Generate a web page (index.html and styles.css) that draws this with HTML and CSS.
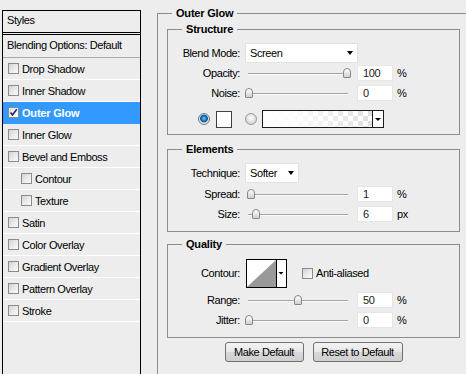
FILE: index.html
```html
<!DOCTYPE html>
<html>
<head>
<meta charset="utf-8">
<link rel="stylesheet" href="styles.css">
</head>
<body>
<div class="dialog">
  <div class="styles">
    <div class="styles-head">Styles</div>
    <div class="blend-opts">Blending Options: Default</div>
    <div class="item"><span class="cb"></span>Drop Shadow</div>
    <div class="item"><span class="cb"></span>Inner Shadow</div>
    <div class="item active"><span class="cb"><svg width="9" height="9" viewBox="0 0 9 9"><path d="M1.5 4.5 L3.5 7 L7.8 1.2" fill="none" stroke="#24236a" stroke-width="1.6"/></svg></span>Outer Glow</div>
    <div class="item"><span class="cb"></span>Inner Glow</div>
    <div class="item"><span class="cb"></span>Bevel and Emboss</div>
    <div class="item sub"><span class="cb"></span>Contour</div>
    <div class="item sub"><span class="cb"></span>Texture</div>
    <div class="item"><span class="cb"></span>Satin</div>
    <div class="item"><span class="cb"></span>Color Overlay</div>
    <div class="item"><span class="cb"></span>Gradient Overlay</div>
    <div class="item"><span class="cb"></span>Pattern Overlay</div>
    <div class="item"><span class="cb"></span>Stroke</div>
  </div>

  <fieldset class="outer">
    <legend class="outer-legend">Outer Glow</legend>

    <fieldset class="group structure">
      <legend>Structure</legend>
      <div class="row">
        <span class="lbl">Blend Mode:</span>
        <div class="select blend">Screen<span class="caret"></span></div>
      </div>
      <div class="row">
        <span class="lbl">Opacity:</span>
        <div class="slider"><span class="thumb" style="left:98px"></span></div>
        <span class="num">100</span><span class="unit">%</span>
      </div>
      <div class="row">
        <span class="lbl">Noise:</span>
        <div class="slider"><span class="thumb" style="left:0px"></span></div>
        <span class="num">0</span><span class="unit">%</span>
      </div>
      <div class="color-row">
        <span class="radio on"></span>
        <span class="swatch"></span>
        <span class="radio"></span>
        <div class="gradbox"><span class="grad"></span><span class="grad-arrow"><span class="caret"></span></span></div>
      </div>
    </fieldset>

    <fieldset class="group elements">
      <legend>Elements</legend>
      <div class="row tall">
        <span class="lbl">Technique:</span>
        <div class="select tech">Softer<span class="caret"></span></div>
      </div>
      <div class="row">
        <span class="lbl">Spread:</span>
        <div class="slider"><span class="thumb" style="left:2px"></span></div>
        <span class="num">1</span><span class="unit">%</span>
      </div>
      <div class="row">
        <span class="lbl">Size:</span>
        <div class="slider"><span class="thumb" style="left:7px"></span></div>
        <span class="num">6</span><span class="unit">px</span>
      </div>
    </fieldset>

    <fieldset class="group quality">
      <legend>Quality</legend>
      <div class="row contour-row">
        <span class="lbl">Contour:</span>
        <svg class="contour" width="41" height="29" viewBox="0 0 41 29">
          <rect x="0.5" y="0.5" width="40" height="28" fill="#fff" stroke="#000"/>
          <polygon points="1,28 30,1 30,28" fill="#999"/>
          <line x1="30.5" y1="0.5" x2="30.5" y2="28.5" stroke="#000"/>
          <polygon points="32.5,13 37.5,13 35,15.5" fill="#000"/>
        </svg>
        <span class="cb aa"></span><span class="aa-text">Anti-aliased</span>
      </div>
      <div class="row range-row">
        <span class="lbl">Range:</span>
        <div class="slider"><span class="thumb" style="left:49px"></span></div>
        <span class="num">50</span><span class="unit">%</span>
      </div>
      <div class="row">
        <span class="lbl">Jitter:</span>
        <div class="slider"><span class="thumb" style="left:0px"></span></div>
        <span class="num">0</span><span class="unit">%</span>
      </div>
    </fieldset>

    <div class="buttons">
      <button class="btn make">Make Default</button>
      <button class="btn reset">Reset to Default</button>
    </div>
  </fieldset>
</div>
</body>
</html>
```

FILE: styles.css
```css
html, body {
  margin: 0;
  padding: 0;
}
body {
  width: 466px;
  height: 374px;
  overflow: hidden;
  background: #ededed;
  font: 11px "Liberation Sans", Arial, sans-serif;
  letter-spacing: -0.4px;
  color: #000;
}
.dialog {
  display: flex;
  align-items: flex-start;
}

/* left styles list */
.styles {
  flex: none;
  width: 137px;
  height: 380px;
  margin: 10px 0 0 2px;
  border: 1px solid #000;
  border-bottom: 0;
  background: #ededed;
}
.styles-head {
  height: 21px;
  line-height: 19px;
  padding-left: 4px;
  border-bottom: 3px double #000;
}
.blend-opts {
  height: 22px;
  line-height: 21px;
  padding-left: 4px;
  border-bottom: 1px solid #a9a9a9;
}
.item {
  display: flex;
  align-items: center;
  gap: 3px;
  height: 21px;
  padding-left: 5px;
  border-bottom: 1px solid #fff;
}
.item.sub {
  padding-left: 18px;
}
.item.active {
  background: #3399ff;
  color: #fff;
  font-weight: bold;
  letter-spacing: -0.2px;
  border-bottom-color: #3399ff;
}
.cb {
  flex: none;
  box-sizing: border-box;
  width: 11px;
  height: 11px;
  border: 1px solid #8b8b8b;
  background: linear-gradient(135deg, #d2d2d2 0%, #e9e9e9 50%, #fbfbfb 100%);
  display: flex;
  align-items: center;
  justify-content: center;
}
.item.active .cb {
  background: linear-gradient(135deg, #dcdcdc 0%, #f3f3f3 60%, #fff 100%);
}
.cb svg {
  display: block;
}

/* right side */
.outer {
  flex: 1;
  min-width: 0;
  box-sizing: border-box;
  min-height: 380px;
  margin: 6px 0 0 16px;
  padding: 2px 6px 0 9px;
  border: 1px solid #8c8c8c;
  border-right: 0;
  border-bottom: 0;
}
legend {
  font-weight: bold;
  line-height: 14px;
  letter-spacing: -0.2px;
  padding: 0 4px;
}
.outer-legend {
  margin-left: 5px;
}
.group {
  margin: 0;
  padding: 0;
  border: 1px solid #8c8c8c;
  min-width: 0;
}
.group legend {
  margin-left: 14px;
}
.structure {
  padding: 7px 0 4px;
}
.elements {
  margin-top: 7px;
  padding: 6px 0 7px;
}
.quality {
  margin-top: 5px;
  padding: 7px 0 7px;
}

.row {
  display: flex;
  align-items: center;
  height: 20px;
}
.row.tall {
  height: 22px;
}
.lbl {
  flex: none;
  width: 72px;
  margin-right: 5px;
  text-align: right;
}
.select {
  flex: none;
  box-sizing: border-box;
  display: flex;
  align-items: center;
  height: 20px;
  padding-left: 4px;
  background: #fff;
  border: 1px solid #e2e2e2;
}
.select.blend {
  width: 113px;
}
.select.tech {
  width: 54px;
}
.caret {
  width: 0;
  height: 0;
  margin-left: auto;
  margin-right: 4px;
  border-left: 3.5px solid transparent;
  border-right: 3.5px solid transparent;
  border-top: 4px solid #000;
}

.slider {
  flex: none;
  position: relative;
  width: 106px;
  height: 20px;
  margin-right: 6px;
}
.slider::before {
  content: "";
  position: absolute;
  left: 3px;
  right: 3px;
  top: 10px;
  border-top: 1px solid #a3a3a3;
  border-bottom: 1px solid #fbfbfb;
}
.thumb {
  position: absolute;
  top: 5px;
  box-sizing: border-box;
  width: 8px;
  height: 10px;
  border: 1px solid #878787;
  border-radius: 4px 4px 1px 1px;
  background: linear-gradient(#ffffff, #d0d0d0);
}
.num {
  flex: none;
  box-sizing: border-box;
  width: 36px;
  height: 16px;
  line-height: 15px;
  padding-left: 5px;
  margin-right: 4px;
  background: #fff;
  border: 1px solid #e6e6e6;
  color: #1a1a1a;
}

.color-row {
  display: flex;
  align-items: center;
  height: 22px;
  margin-top: 5px;
  padding-left: 30px;
}
.radio {
  flex: none;
  box-sizing: border-box;
  width: 12px;
  height: 12px;
  border-radius: 50%;
  border: 1px solid #9a9a9a;
  background: radial-gradient(circle at 50% 40%, #ffffff 0, #e4e4e4 45%, #c8c8c8 100%);
  margin-right: 5px;
}
.radio.on {
  border-color: #6f7f8c;
  background: radial-gradient(circle at 50% 45%, #7ccaf4 0, #1b86cf 2px, #0b4f8c 3.5px, #d9d9d9 4.2px, #f2f2f2 100%);
  margin-right: 6px;
}
.swatch {
  flex: none;
  box-sizing: border-box;
  width: 16px;
  height: 17px;
  background: #fff;
  border: 1px solid #3f3f3f;
  margin-right: 13px;
}
.gradbox {
  flex: none;
  box-sizing: border-box;
  display: flex;
  width: 122px;
  height: 18px;
  border: 1px solid #1c1c1c;
  background: #fff;
}
.grad {
  flex: 1;
  background:
    linear-gradient(to right, #ffffff 0%, rgba(255,255,255,0.85) 30%, rgba(255,255,255,0) 100%),
    repeating-conic-gradient(#dedede 0 25%, #ffffff 0 50%) 0 0 / 10px 10px;
}
.grad-arrow {
  flex: none;
  width: 10px;
  border-left: 1px solid #1c1c1c;
  display: flex;
  align-items: center;
  justify-content: center;
}
.grad-arrow .caret {
  margin: 0;
  border-left-width: 3px;
  border-right-width: 3px;
  border-top-width: 3px;
}

.contour-row {
  height: 30px;
}
.contour {
  flex: none;
  display: block;
  margin-left: 1px;
}
.cb.aa {
  margin-left: 15px;
  margin-right: 3px;
}
.range-row {
  margin-top: 2px;
}

.buttons {
  display: flex;
  justify-content: center;
  gap: 9px;
  margin-top: 4px;
}
.btn {
  box-sizing: border-box;
  height: 20px;
  padding: 0;
  font: 11px "Liberation Sans", Arial, sans-serif;
  letter-spacing: -0.4px;
  color: #000;
  border: 1px solid #707070;
  border-radius: 3px;
  background: linear-gradient(#f4f4f4 0%, #e6e6e6 50%, #d8d8d8 51%, #cfcfcf 100%);
}
.btn.make {
  width: 79px;
}
.btn.reset {
  width: 90px;
}
```
